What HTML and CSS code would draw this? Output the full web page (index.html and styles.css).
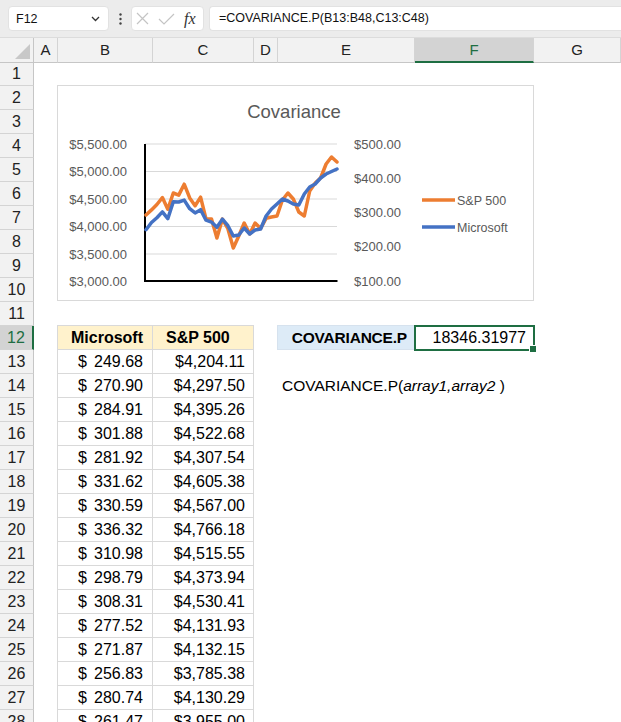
FILE: index.html
```html
<!DOCTYPE html>
<html>
<head>
<meta charset="utf-8">
<link rel="stylesheet" href="styles.css">
</head>
<body>
<div class="topbar">
  <div class="namebox"><span>F12</span>
    <svg class="chev" width="9" height="6" viewBox="0 0 9 6"><path d="M1 1 L4.5 4.5 L8 1" fill="none" stroke="#333" stroke-width="1.3"/></svg>
  </div>
  <div class="vdots"><svg width="3" height="12" viewBox="0 0 3 12"><circle cx="1.5" cy="1.5" r="1.2" fill="#444"/><circle cx="1.5" cy="6" r="1.2" fill="#444"/><circle cx="1.5" cy="10.5" r="1.2" fill="#444"/></svg></div>
  <div class="fxbox">
    <svg width="50" height="23" viewBox="0 0 50 23"><path d="M5 6 L16 17 M16 6 L5 17" stroke="#c4c4c4" stroke-width="1.2" fill="none"/><path d="M27 12 L32 17 L42 7" stroke="#c4c4c4" stroke-width="1.2" fill="none"/></svg>
    <span class="fx">fx</span>
  </div>
  <div class="formula">=COVARIANCE.P(B13:B48,C13:C48)</div>
</div>

<div class="sheet">
  <div class="row hdr">
    <div class="corner"><span class="tri"></span></div>
    <div class="ch">A</div><div class="ch">B</div><div class="ch">C</div><div class="ch">D</div><div class="ch">E</div><div class="ch sel">F</div><div class="ch">G</div>
  </div>
  <div class="row"><div class="rh">1</div></div>
  <div class="row"><div class="rh">2</div></div>
  <div class="row"><div class="rh">3</div></div>
  <div class="row"><div class="rh">4</div></div>
  <div class="row"><div class="rh">5</div></div>
  <div class="row"><div class="rh">6</div></div>
  <div class="row"><div class="rh">7</div></div>
  <div class="row"><div class="rh">8</div></div>
  <div class="row"><div class="rh">9</div></div>
  <div class="row"><div class="rh">10</div></div>
  <div class="row"><div class="rh">11</div></div>
  <div class="row">
    <div class="rh rsel">12</div>
    <div class="cell cb th top">Microsoft</div>
    <div class="cell cc th top">S&amp;P 500</div>
    <div class="lbl">COVARIANCE.P</div>
    <div class="active">18346.31977</div>
  </div>
  <div class="row"><div class="rh">13</div><div class="cell cb acc"><span>$</span><span>249.68</span></div><div class="cell cc num">$4,204.11</div></div>
  <div class="row"><div class="rh">14</div><div class="cell cb acc"><span>$</span><span>270.90</span></div><div class="cell cc num">$4,297.50</div>
    <div class="syntax">COVARIANCE.P(<i>array1,array2</i> )</div></div>
  <div class="row"><div class="rh">15</div><div class="cell cb acc"><span>$</span><span>284.91</span></div><div class="cell cc num">$4,395.26</div></div>
  <div class="row"><div class="rh">16</div><div class="cell cb acc"><span>$</span><span>301.88</span></div><div class="cell cc num">$4,522.68</div></div>
  <div class="row"><div class="rh">17</div><div class="cell cb acc"><span>$</span><span>281.92</span></div><div class="cell cc num">$4,307.54</div></div>
  <div class="row"><div class="rh">18</div><div class="cell cb acc"><span>$</span><span>331.62</span></div><div class="cell cc num">$4,605.38</div></div>
  <div class="row"><div class="rh">19</div><div class="cell cb acc"><span>$</span><span>330.59</span></div><div class="cell cc num">$4,567.00</div></div>
  <div class="row"><div class="rh">20</div><div class="cell cb acc"><span>$</span><span>336.32</span></div><div class="cell cc num">$4,766.18</div></div>
  <div class="row"><div class="rh">21</div><div class="cell cb acc"><span>$</span><span>310.98</span></div><div class="cell cc num">$4,515.55</div></div>
  <div class="row"><div class="rh">22</div><div class="cell cb acc"><span>$</span><span>298.79</span></div><div class="cell cc num">$4,373.94</div></div>
  <div class="row"><div class="rh">23</div><div class="cell cb acc"><span>$</span><span>308.31</span></div><div class="cell cc num">$4,530.41</div></div>
  <div class="row"><div class="rh">24</div><div class="cell cb acc"><span>$</span><span>277.52</span></div><div class="cell cc num">$4,131.93</div></div>
  <div class="row"><div class="rh">25</div><div class="cell cb acc"><span>$</span><span>271.87</span></div><div class="cell cc num">$4,132.15</div></div>
  <div class="row"><div class="rh">26</div><div class="cell cb acc"><span>$</span><span>256.83</span></div><div class="cell cc num">$3,785.38</div></div>
  <div class="row"><div class="rh">27</div><div class="cell cb acc"><span>$</span><span>280.74</span></div><div class="cell cc num">$4,130.29</div></div>
  <div class="row"><div class="rh">28</div><div class="cell cb acc"><span>$</span><span>261.47</span></div><div class="cell cc num">$3,955.00</div></div>
</div>

<div class="chart">
  <svg width="475" height="214" viewBox="58 86 475 214" font-family="Liberation Sans, Arial, sans-serif">
    <text x="294" y="118" font-size="18.5" fill="#595959" text-anchor="middle">Covariance</text>
    <g stroke="#d9d9d9" stroke-width="1">
      <line x1="145" y1="144" x2="337" y2="144"/>
      <line x1="145" y1="171.5" x2="337" y2="171.5"/>
      <line x1="145" y1="199" x2="337" y2="199"/>
      <line x1="145" y1="226.5" x2="337" y2="226.5"/>
      <line x1="145" y1="254" x2="337" y2="254"/>
    </g>
    <line x1="145" y1="144" x2="145" y2="282" stroke="#000" stroke-width="2"/>
    <line x1="144" y1="281" x2="337.5" y2="281" stroke="#000" stroke-width="2"/>
    <g font-size="13" fill="#595959" text-anchor="end">
      <text x="127" y="148.6">$5,500.00</text>
      <text x="127" y="176.1">$5,000.00</text>
      <text x="127" y="203.6">$4,500.00</text>
      <text x="127" y="231.1">$4,000.00</text>
      <text x="127" y="258.6">$3,500.00</text>
      <text x="127" y="285.6">$3,000.00</text>
    </g>
    <g font-size="13" fill="#595959">
      <text x="354" y="148.8">$500.00</text>
      <text x="354" y="183">$400.00</text>
      <text x="354" y="217.2">$300.00</text>
      <text x="354" y="251.4">$200.00</text>
      <text x="354" y="285.6">$100.00</text>
    </g>
    <polyline fill="none" stroke="#ED7D31" stroke-width="3.5" stroke-linejoin="round" stroke-linecap="round"
      points="146,215 151.5,209.9 156.9,204.5 162.4,197.6 167.8,209.3 173.3,193 178.7,195.1 184.2,184.2 189.7,197.9 195.1,205.7 200.6,197.1 206,219 211.5,219 216.9,238 222.4,219.1 227.9,228.7 233.3,248 238.8,236 244.2,223 249.7,234 255.1,223 260.6,228.5 266.1,218.3 271.5,217 277,216 282.4,200 287.9,193 293.3,199 298.8,212 304.3,216 309.7,191 315.2,183 320.6,178 326.1,164 331.5,157 337,162"/>
    <polyline fill="none" stroke="#4472C4" stroke-width="3.5" stroke-linejoin="round" stroke-linecap="round"
      points="146,229.7 151.5,222.5 156.9,217.7 162.4,211.9 167.8,218.7 173.3,201.7 178.7,202 184.2,200.1 189.7,208.7 195.1,212.9 200.6,209.7 206,220.2 211.5,222.1 216.9,227.3 222.4,219.1 227.9,225.7 233.3,236 238.8,235 244.2,228 249.7,234 255.1,230 260.6,229 266.1,216 271.5,209 277,204 282.4,199 287.9,201 293.3,204 298.8,205 304.3,194 309.7,187 315.2,184 320.6,178 326.1,174 331.5,171.5 337,169"/>
    <line x1="422" y1="200" x2="455" y2="200" stroke="#ED7D31" stroke-width="3.5"/>
    <line x1="422" y1="227" x2="455" y2="227" stroke="#4472C4" stroke-width="3.5"/>
    <g font-size="12.5" fill="#595959">
      <text x="457" y="204.5">S&amp;P 500</text>
      <text x="457" y="231.5">Microsoft</text>
    </g>
  </svg>
</div>
</body>
</html>
```

FILE: styles.css
```css
* { box-sizing: border-box; margin: 0; padding: 0; }
html, body { width: 621px; height: 722px; overflow: hidden; background: #fff; }
body { font-family: "Liberation Sans", Arial, sans-serif; color: #000; position: relative; }

.topbar {
  height: 38px;
  background: #ececec;
  border-bottom: 1px solid #dcdcdc;
  display: flex;
  align-items: flex-start;
  padding-top: 6px;
  overflow: hidden;
}
.namebox {
  margin-left: 8px;
  width: 101px;
  height: 25px;
  background: #fff;
  border: 1px solid #e2e2e2;
  border-radius: 4px;
  display: flex;
  align-items: center;
  justify-content: space-between;
  padding: 0 8px 0 7px;
  font-size: 12.5px;
  color: #111;
}
.vdots { width: 22px; height: 25px; display: flex; align-items: center; justify-content: center; }
.vdots svg { display: block; }
.fxbox {
  width: 73px;
  height: 25px;
  background: #fff;
  border: 1px solid #e2e2e2;
  border-radius: 4px;
  display: flex;
  align-items: center;
}
.fxbox svg { display: block; }
.fx {
  margin-left: 2px;
  font-family: "Liberation Serif", "Times New Roman", serif;
  font-style: italic;
  font-size: 16px;
  color: #333;
}
.formula {
  margin-left: 5px;
  flex: 1;
  height: 25px;
  background: #fff;
  border: 1px solid #e2e2e2;
  border-right: none;
  border-radius: 4px 0 0 4px;
  padding-left: 9px;
  font-size: 12.5px;
  line-height: 23px;
  color: #111;
  white-space: nowrap;
}

.row {
  display: grid;
  grid-template-columns: 34px 24px 95px 101px 24px 137px 119px 1fr;
  height: 24px;
}
.hdr .ch, .corner {
  background: #f2f2f2;
  border-right: 1px solid #d4d4d4;
  border-bottom: 1px solid #c6c6c6;
  text-align: center;
  font-size: 15px;
  line-height: 23px;
  color: #222;
}
.corner { position: relative; border-right-color: #c6c6c6; }
.tri {
  position: absolute;
  right: 3px;
  bottom: 3px;
  width: 0;
  height: 0;
  border-left: 15px solid transparent;
  border-bottom: 15px solid #c8c8c8;
}
.hdr .ch.sel {
  background: #d3d3d3;
  color: #1e6e42;
  border-bottom: 2px solid #1e6e42;
}
.rh {
  grid-column: 1;
  background: #f2f2f2;
  border-right: 1px solid #c6c6c6;
  border-bottom: 1px solid #d4d4d4;
  text-align: center;
  font-size: 16px;
  line-height: 23px;
  color: #222;
}
.rh.rsel {
  background: #d3d3d3;
  color: #1e6e42;
  border-right: 2px solid #1e6e42;
}

.cell {
  height: 24px;
  font-size: 16px;
  line-height: 23px;
  border-bottom: 1px solid #d9d9d9;
  border-right: 1px solid #d9d9d9;
  white-space: nowrap;
}
.cb { grid-column: 3; margin-left: -1px; border-left: 1px solid #d9d9d9; }
.cc { grid-column: 4; }
.top { margin-top: -1px; height: 25px; border-top: 1px solid #d9d9d9; }
.th { background: #fff2cc; font-weight: bold; padding-left: 13px; line-height: 23px; }
.acc { display: flex; justify-content: space-between; padding: 0 9px 0 20px; }
.num { text-align: right; padding-right: 8px; }

.lbl {
  grid-column: 6;
  margin: -1px 0 0 -1px;
  height: 25px;
  background: #ddebf7;
  border: 1px solid #d6e2ee;
  font-weight: bold;
  font-size: 15.5px;
  letter-spacing: -0.2px;
  line-height: 23px;
  text-align: right;
  padding-right: 7px;
  white-space: nowrap;
}
.active {
  grid-column: 7;
  position: relative;
  margin: -1px -1px -1px -1px;
  height: 26px;
  border: 2px solid #1e6e42;
  font-size: 16px;
  line-height: 22px;
  text-align: right;
  padding-right: 7px;
  background: #fff;
}
.active::after {
  content: "";
  position: absolute;
  right: -4px;
  bottom: -4px;
  width: 6px;
  height: 6px;
  background: #1e6e42;
  border: 1px solid #fff;
}
.syntax {
  grid-column: 6 / span 2;
  padding-left: 4px;
  font-size: 15.5px;
  line-height: 23px;
  white-space: nowrap;
}

.chart {
  position: absolute;
  left: 57px;
  top: 85px;
  width: 477px;
  height: 216px;
  border: 1px solid #d9d9d9;
  background: #fff;
}
.chart svg { display: block; }
```
